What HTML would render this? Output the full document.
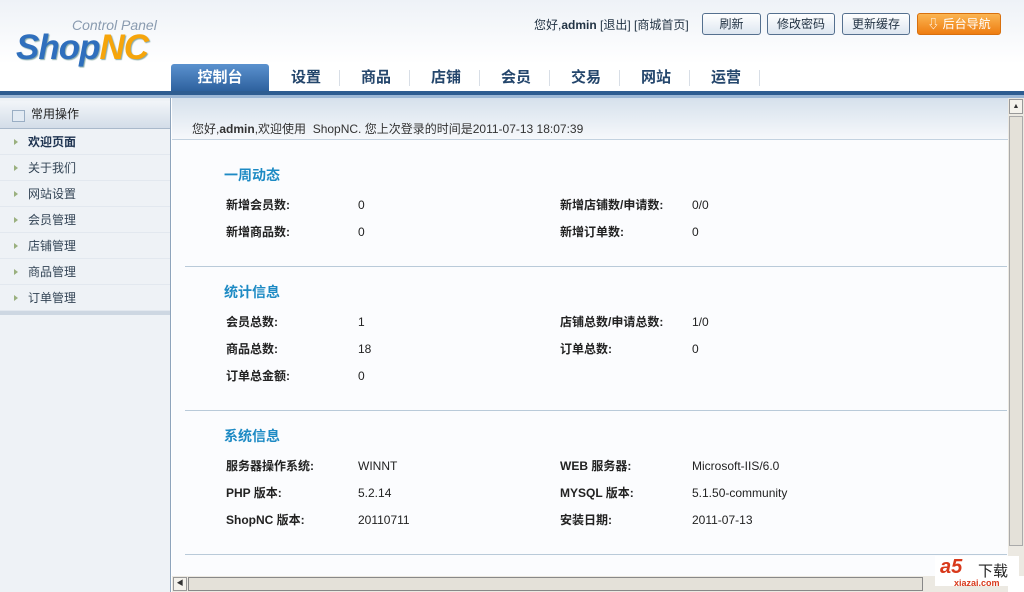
<!DOCTYPE html>
<html><head><meta charset="utf-8"><style>
*{margin:0;padding:0;box-sizing:border-box}
body{width:1024px;height:592px;overflow:hidden;position:relative;font-family:"Liberation Sans","Noto Sans CJK SC",sans-serif;font-size:12px;color:#333;background:#fff}
.abs{position:absolute}
#hdr{left:0;top:0;width:1024px;height:91px;background:linear-gradient(#eef2f7,#fff 70%)}
.logo1{left:72px;top:17px;font-style:italic;color:#8a9bb0;font-size:14px}
.logo2{left:16px;top:28px;font-style:italic;font-weight:bold;font-size:35px;letter-spacing:-1px;color:#2f6fbd;text-shadow:1px 1px 1px #8aa}
.logo2 span{color:#f6a50b}
.top{top:16px;left:534px;font-size:12px;color:#234}
.btn{top:13px;height:22px;border:1px solid #55708f;border-radius:3px;background:linear-gradient(#fff,#dde6f0);font-size:12px;text-align:center;line-height:20px;color:#234}
.nav{top:64px;height:27px;font-size:15px;font-weight:bold;color:#24466c;line-height:27px}
.sep{top:70px;width:1px;height:16px;background:#d8dee6}
.tab{left:171px;top:64px;width:98px;height:28px;background:linear-gradient(#5b92cf,#2c5f9c);border-radius:3px 3px 0 0;color:#fff;font-size:15px;font-weight:bold;text-align:center;line-height:28px}
#bar{left:0;top:91px;width:1024px;height:7px;background:linear-gradient(#2e5d91 0,#2e5d91 4px,#9db8d6 4px)}
#side{left:0;top:98px;width:171px;height:494px;background:#eef2f6;border-right:1px solid #8ea4bc}
.sh{left:0;top:101px;width:170px;height:28px;background:linear-gradient(#f2f5f9,#d3dde8);border-bottom:1px solid #a9b9cb;line-height:26px;padding-left:31px;font-size:12px;color:#222}
.sh i{position:absolute;left:12px;top:9px;width:13px;height:12px;border:1px solid #9aaec4;background:#e2eaf3}
.si{left:0;width:170px;height:26px;border-bottom:1px solid #e2e8ef;line-height:26px;padding-left:28px;font-size:12px;color:#345}
.si:before{content:"";position:absolute;left:14px;top:10px;border-left:4px solid #9ab07f;border-top:3px solid transparent;border-bottom:3px solid transparent}
#main{left:172px;top:98px;width:836px;height:478px;background:#fbfcfe}
.strip{left:172px;top:98px;width:836px;height:42px;background:linear-gradient(#d6e1ec,#f6f8fb);border-bottom:1px solid #c3d2e0}
.hl{left:185px;width:822px;height:1px;background:#b9cad9}
.h{left:224px;font-size:14px;font-weight:bold;color:#1d8ac4}
.l{font-weight:bold;color:#222;font-size:12px;line-height:16px}
.v{color:#222;font-size:12px;line-height:16px}
#vs{left:1008px;top:98px;width:16px;height:478px;background:#ece9e2}
#hs{left:172px;top:576px;width:836px;height:16px;background:#ece9e2}
</style></head><body>
<div id="hdr" class="abs"></div>
<div class="abs logo1">Control Panel</div>
<div class="abs logo2">Shop<span>NC</span></div>
<div class="abs top">您好,<b>admin</b> [退出] [商城首页]</div>
<div class="abs btn" style="left:702px;width:59px">刷新</div>
<div class="abs btn" style="left:767px;width:68px">修改密码</div>
<div class="abs btn" style="left:842px;width:68px">更新缓存</div>
<div class="abs btn" style="left:917px;width:84px;background:linear-gradient(#fbb552,#ee7d11);border-color:#d8700e;color:#fff">⇩ 后台导航</div>
<div class="abs tab">控制台</div>
<div class="abs nav" style="left:291px">设置</div><div class="abs sep" style="left:339px"></div>
<div class="abs nav" style="left:361px">商品</div><div class="abs sep" style="left:409px"></div>
<div class="abs nav" style="left:431px">店铺</div><div class="abs sep" style="left:479px"></div>
<div class="abs nav" style="left:501px">会员</div><div class="abs sep" style="left:549px"></div>
<div class="abs nav" style="left:571px">交易</div><div class="abs sep" style="left:619px"></div>
<div class="abs nav" style="left:641px">网站</div><div class="abs sep" style="left:689px"></div>
<div class="abs nav" style="left:711px">运营</div><div class="abs sep" style="left:759px"></div>
<div id="bar" class="abs"></div>
<div id="side" class="abs"></div>
<div class="abs sh"><i></i>常用操作</div>
<div class="abs si" style="top:129px;font-weight:bold;color:#1e3350">欢迎页面</div>
<div class="abs si" style="top:155px">关于我们</div>
<div class="abs si" style="top:181px">网站设置</div>
<div class="abs si" style="top:207px">会员管理</div>
<div class="abs si" style="top:233px">店铺管理</div>
<div class="abs si" style="top:259px">商品管理</div>
<div class="abs si" style="top:285px">订单管理</div>
<div class="abs" style="left:0;top:311px;width:170px;height:4px;background:#cdd7e2"></div>
<div id="main" class="abs"></div>
<div class="abs strip"></div>
<div class="abs" style="left:192px;top:120px;color:#333">您好,<b>admin</b>,欢迎使用 &nbsp;ShopNC. 您上次登录的时间是2011-07-13 18:07:39</div>
<div class="abs h" style="top:165px">一周动态</div>
<div class="abs l" style="left:226px;top:197px">新增会员数:</div><div class="abs v" style="left:358px;top:197px">0</div>
<div class="abs l" style="left:560px;top:197px">新增店铺数/申请数:</div><div class="abs v" style="left:692px;top:197px">0/0</div>
<div class="abs l" style="left:226px;top:224px">新增商品数:</div><div class="abs v" style="left:358px;top:224px">0</div>
<div class="abs l" style="left:560px;top:224px">新增订单数:</div><div class="abs v" style="left:692px;top:224px">0</div>
<div class="abs hl" style="top:266px"></div>
<div class="abs h" style="top:282px">统计信息</div>
<div class="abs l" style="left:226px;top:314px">会员总数:</div><div class="abs v" style="left:358px;top:314px">1</div>
<div class="abs l" style="left:560px;top:314px">店铺总数/申请总数:</div><div class="abs v" style="left:692px;top:314px">1/0</div>
<div class="abs l" style="left:226px;top:341px">商品总数:</div><div class="abs v" style="left:358px;top:341px">18</div>
<div class="abs l" style="left:560px;top:341px">订单总数:</div><div class="abs v" style="left:692px;top:341px">0</div>
<div class="abs l" style="left:226px;top:368px">订单总金额:</div><div class="abs v" style="left:358px;top:368px">0</div>
<div class="abs hl" style="top:410px"></div>
<div class="abs h" style="top:426px">系统信息</div>
<div class="abs l" style="left:226px;top:458px">服务器操作系统:</div><div class="abs v" style="left:358px;top:458px">WINNT</div>
<div class="abs l" style="left:560px;top:458px">WEB 服务器:</div><div class="abs v" style="left:692px;top:458px">Microsoft-IIS/6.0</div>
<div class="abs l" style="left:226px;top:485px">PHP 版本:</div><div class="abs v" style="left:358px;top:485px">5.2.14</div>
<div class="abs l" style="left:560px;top:485px">MYSQL 版本:</div><div class="abs v" style="left:692px;top:485px">5.1.50-community</div>
<div class="abs l" style="left:226px;top:512px">ShopNC 版本:</div><div class="abs v" style="left:358px;top:512px">20110711</div>
<div class="abs l" style="left:560px;top:512px">安装日期:</div><div class="abs v" style="left:692px;top:512px">2011-07-13</div>
<div class="abs hl" style="top:554px"></div>
<div id="vs" class="abs"><div class="abs" style="left:1px;top:1px;width:14px;height:15px;background:#f4f2ec;border:1px solid #999;font-size:7px;text-align:center;line-height:13px">▲</div><div class="abs" style="left:1px;top:18px;width:14px;height:430px;background:#e4e1d9;border:1px solid #aaa"></div></div>
<div id="hs" class="abs"><div class="abs" style="left:1px;top:1px;width:14px;height:14px;background:#f4f2ec;border:1px solid #999;font-size:7px;text-align:center;line-height:12px">◀</div><div class="abs" style="left:16px;top:1px;width:735px;height:14px;background:#e4e1d9;border:1px solid #888"></div></div>
<div class="abs" style="left:935px;top:556px;width:84px;height:30px;background:#fff"></div>
<div class="abs" style="left:940px;top:556px;font-size:20px;font-weight:bold;font-style:italic;color:#d8391b">a5</div>
<div class="abs" style="left:978px;top:560px;font-size:15px;color:#222">下载</div>
<div class="abs" style="left:954px;top:578px;font-size:9px;font-weight:bold;color:#d8391b">xiazai.com</div>
</body></html>
